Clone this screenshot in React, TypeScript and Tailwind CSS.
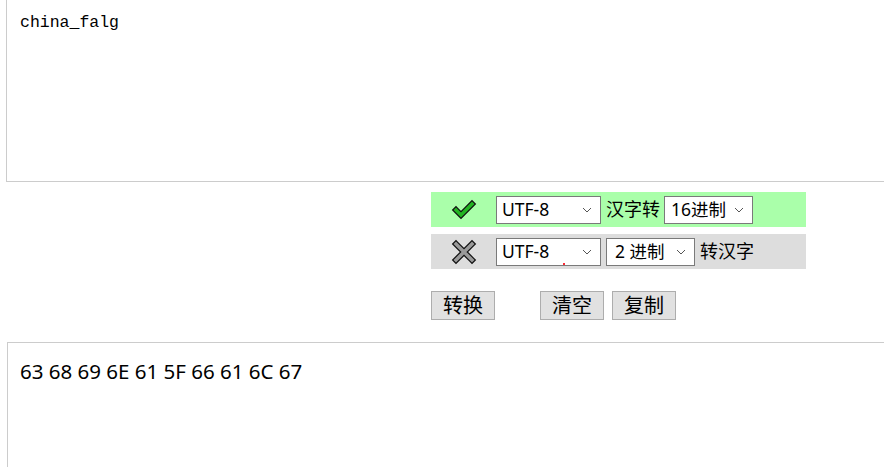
import React from 'react';

const font = { fontFamily: '"Noto Sans", "Noto Sans CJK SC", sans-serif' };

const Chevron = () => (
  <svg width="10" height="6" viewBox="0 0 10 6" className="absolute right-[8px] top-1/2 -translate-y-1/2 pointer-events-none">
    <path d="M1 1 L5 5 L9 1" fill="none" stroke="#555" strokeWidth="1" />
  </svg>
);

const Select: React.FC<{ value: string; width: string; dot?: boolean; pad?: string }> = ({ value, width, dot, pad }) => (
  <div className={`relative ${width} h-[28px] bg-white border border-[#7a7a7a] flex items-center ${pad ?? 'pl-[5px]'} text-[17.5px] text-black leading-none`}>
    <span>{value}</span>
    {dot && <span className="absolute left-[66px] top-[24px] w-[2px] h-[2px] bg-red-500" />}
    <Chevron />
  </div>
);

const CheckIcon = () => (
  <svg width="26" height="22" viewBox="0 0 26 22">
    <path d="M5 11 L10 16 L21 5" fill="none" stroke="#111" strokeWidth="6" strokeLinecap="square" strokeLinejoin="miter" />
    <path d="M5 11 L10 16 L21 5" fill="none" stroke="#22b422" strokeWidth="3.5" strokeLinecap="square" strokeLinejoin="miter" />
  </svg>
);

const CrossIcon = () => (
  <svg width="26" height="26" viewBox="0 0 26 26">
    <path d="M5 5 L21 21 M21 5 L5 21" fill="none" stroke="#111" strokeWidth="6" strokeLinecap="square" />
    <path d="M5 5 L21 21 M21 5 L5 21" fill="none" stroke="#9a9a9a" strokeWidth="3.5" strokeLinecap="square" />
  </svg>
);

const Btn: React.FC<{ label: string }> = ({ label }) => (
  <button className="w-[64px] h-[29px] bg-[#e1e1e1] border border-[#adadad] text-[20px] text-black leading-none flex items-center justify-center">
    {label}
  </button>
);

export default function App() {
  return (
    <div className="w-[884px] h-[467px] overflow-hidden bg-white relative" style={font}>
      <div className="ml-[6px] w-[900px] h-[182px] border-l border-b border-[#cccccc] pl-[13px] pt-[11px]">
        <div className="text-[16.5px] text-black" style={{ fontFamily: '"Liberation Mono", "DejaVu Sans Mono", monospace' }}>
          china_falg
        </div>
      </div>

      <div className="ml-[431px] mt-[10px] w-[375px] flex flex-col gap-[7px]">
        <div className="h-[35px] bg-[#aaffaa] flex items-center">
          <div className="w-[65px] flex justify-center pt-[1px]">
            <CheckIcon />
          </div>
          <Select value="UTF-8" width="w-[105px]" />
          <span className="text-[18px] text-black ml-[5px] mr-[4px]">汉字转</span>
          <Select value="16进制" width="w-[89px]" pad="pl-[6px]" />
        </div>
        <div className="h-[35px] bg-[#dddddd] flex items-center">
          <div className="w-[65px] flex justify-center">
            <CrossIcon />
          </div>
          <Select value="UTF-8" width="w-[105px]" dot />
          <div className="w-[5px]" />
          <Select value="2 进制" width="w-[89px]" pad="pl-[8px]" />
          <span className="text-[18px] text-black ml-[5px]">转汉字</span>
        </div>
        <div className="flex mt-[15px]">
          <Btn label="转换" />
          <div className="ml-[45px]">
            <Btn label="清空" />
          </div>
          <div className="ml-[8px]">
            <Btn label="复制" />
          </div>
        </div>
      </div>

      <div className="ml-[7px] mt-[22px] w-[900px] h-[200px] border-l border-t border-[#cccccc] pl-[12px] pt-[13px]">
        <div className="text-[20.5px] text-black">63 68 69 6E 61 5F 66 61 6C 67</div>
      </div>
    </div>
  );
}
